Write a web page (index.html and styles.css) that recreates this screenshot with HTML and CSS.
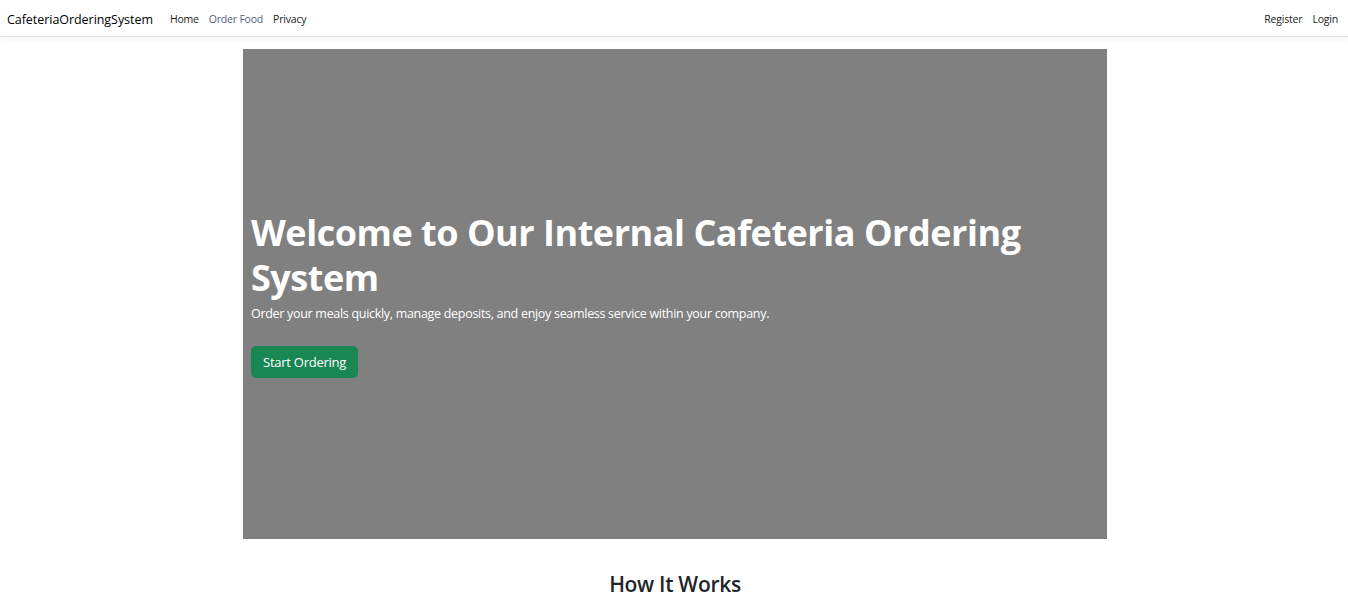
FILE: index.html
```html
<!DOCTYPE html>
<html lang="en">
<head>
<meta charset="utf-8">
<title>CafeteriaOrderingSystem</title>
<link rel="stylesheet" href="styles.css">
</head>
<body>
<header class="navbar">
  <div class="nav-left">
    <a class="brand" href="#">CafeteriaOrderingSystem</a>
    <nav class="links">
      <a class="link" href="#">Home</a>
      <a class="link active" href="#">Order Food</a>
      <a class="link" href="#">Privacy</a>
    </nav>
  </div>
  <nav class="links">
    <a class="link" href="#">Register</a>
    <a class="link" href="#">Login</a>
  </nav>
</header>
<main class="container">
  <section class="hero">
    <h1 class="hero-title">Welcome to Our Internal Cafeteria Ordering System</h1>
    <p class="hero-sub">Order your meals quickly, manage deposits, and enjoy seamless service within your company.</p>
    <a class="btn-success" href="#">Start Ordering</a>
  </section>
  <section class="how">
    <h2 class="how-title">How It Works</h2>
    <div class="cards">
      <div class="card"></div>
      <div class="card"></div>
      <div class="card"></div>
    </div>
  </section>
</main>
</body>
</html>
```
FILE: styles.css
```css
html, body {
  margin: 0;
  padding: 0;
  background: #fff;
  color: #212529;
  font-family: "Open Sans", "Noto Sans", sans-serif;
}
a { text-decoration: none; }

.navbar {
  display: flex;
  justify-content: space-between;
  align-items: center;
  height: 37px;
  box-sizing: border-box;
  padding: 2px 5px 0 7px;
  border-bottom: 1px solid #dee2e6;
  box-shadow: 0 2px 6px rgba(0,0,0,0.05);
}
.nav-left {
  display: flex;
  align-items: center;
}
.brand {
  color: #000;
  font-size: 12.5px;
  margin-right: 12px;
  letter-spacing: -0.05px;
}
.links {
  display: flex;
}
.link {
  color: #1b1e21;
  font-size: 10.5px;
  padding: 0 5px;
  letter-spacing: -0.2px;
}
.link.active {
  color: #4f6385;
}

.container {
  width: 864px;
  margin: 12px auto 0;
  padding-left: 2px;
}
.hero {
  height: 490px;
  background: #808080;
  color: #fff;
  box-sizing: border-box;
  padding: 0 8px;
  display: flex;
  flex-direction: column;
  justify-content: center;
  align-items: flex-start;
}
.hero-title {
  margin: 0;
  font-size: 36px;
  line-height: 45px;
  font-weight: 700;
  letter-spacing: -0.47px;
}
.hero-sub {
  margin: 4px 0 22px;
  font-size: 12.5px;
  line-height: 20px;
  letter-spacing: -0.3px;
}
.btn-success {
  display: inline-block;
  background: #198754;
  color: #fff;
  font-size: 13px;
  line-height: 20px;
  padding: 6px 12px;
  border-radius: 5px;
  letter-spacing: -0.25px;
}

.how {
  padding-top: 31px;
}
.how-title {
  margin: 0 0 10px;
  text-align: center;
  font-size: 21px;
  font-weight: 600;
  line-height: 28px;
  letter-spacing: -0.3px;
}
.cards {
  display: grid;
  grid-template-columns: repeat(3, 1fr);
  gap: 24px;
  padding: 0 5px;
}
.card {
  height: 120px;
  border: 1px solid #eef0f2;
  border-radius: 6px;
}
```
